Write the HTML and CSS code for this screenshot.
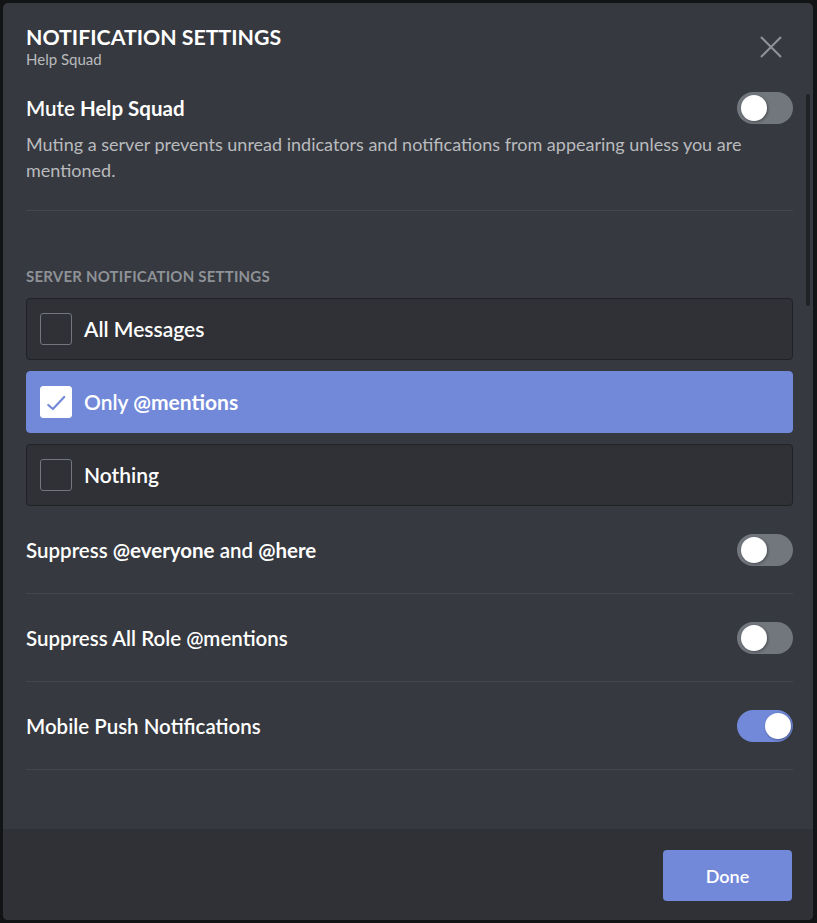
FILE: index.html
```html
<!DOCTYPE html>
<html>
<head>
<meta charset="utf-8">
<link rel="stylesheet" href="styles.css">
</head>
<body>
<div class="modal">
  <div class="header">
    <div class="title-block">
      <div class="title">Notification Settings</div>
      <div class="subtitle">Help Squad</div>
    </div>
    <button class="close" aria-label="Close">
      <svg width="24" height="24" viewBox="0 0 24 24"><path d="M2 2L22 22M22 2L2 22" stroke="#8e9297" stroke-width="2.2" fill="none"/></svg>
    </button>
  </div>
  <div class="scroller">
    <div class="scroll-thumb"></div>
    <div class="mute-row">
      <div class="mute-title">Mute <strong>Help Squad</strong></div>
      <div class="toggle off"><span class="knob"></span></div>
    </div>
    <div class="description">Muting a server prevents unread indicators and notifications from appearing unless you are mentioned.</div>
    <div class="divider"></div>
    <div class="section-label">Server Notification Settings</div>
    <div class="radio-group">
      <div class="radio">
        <span class="checkbox"></span>
        <span class="radio-label">All Messages</span>
      </div>
      <div class="radio selected">
        <span class="checkbox checked">
          <svg width="31" height="31" viewBox="0 0 31 31"><path d="M7.5 18L12.3 22.3L24 9.8" stroke="#7289da" stroke-width="2.2" fill="none" stroke-linecap="round" stroke-linejoin="round"/></svg>
        </span>
        <span class="radio-label">Only <strong>@mentions</strong></span>
      </div>
      <div class="radio">
        <span class="checkbox"></span>
        <span class="radio-label">Nothing</span>
      </div>
    </div>
    <div class="switch-row">
      <div class="switch-label">Suppress <strong>@everyone</strong> and <strong>@here</strong></div>
      <div class="toggle off"><span class="knob"></span></div>
    </div>
    <div class="switch-row">
      <div class="switch-label">Suppress All Role @mentions</div>
      <div class="toggle off"><span class="knob"></span></div>
    </div>
    <div class="switch-row">
      <div class="switch-label">Mobile Push Notifications</div>
      <div class="toggle on"><span class="knob"></span></div>
    </div>
  </div>
  <div class="footer">
    <button class="done">Done</button>
  </div>
</div>
</body>
</html>
```

FILE: styles.css
```css
* { box-sizing: border-box; }
html, body { margin: 0; padding: 0; }
body {
  background: #121315;
  padding: 3px 4px 3px 3px;
  font-family: Lato, "Noto Sans", sans-serif;
  color: #dcddde;
}
.modal {
  width: 810px;
  height: 917px;
  background: #36393f;
  border-radius: 5px;
  display: flex;
  flex-direction: column;
  overflow: hidden;
}
.header {
  display: flex;
  justify-content: space-between;
  align-items: flex-start;
  padding: 22px 20px 0 23px;
}
.title {
  font-size: 21.3px;
  line-height: 24px;
  font-weight: 700;
  text-transform: uppercase;
  color: #ffffff;
}
.subtitle {
  font-size: 15px;
  line-height: 18px;
  margin-top: 1px;
  color: #b9bbbe;
}
.close {
  background: none;
  border: 0;
  padding: 0;
  margin: 10px 10px 0 0;
  width: 24px;
  height: 24px;
  cursor: pointer;
}
.close svg { display: block; }
.scroller {
  position: relative;
  flex: 1;
  overflow: hidden;
  padding: 24px 20px 0 23px;
}
.scroll-thumb {
  position: absolute;
  right: 3px;
  top: 26px;
  width: 4px;
  height: 212px;
  border-radius: 2px;
  background: #202225;
}
.mute-row {
  display: flex;
  align-items: center;
  justify-content: space-between;
  height: 32px;
}
.mute-title {
  font-size: 20.5px;
  line-height: 24px;
  font-weight: 600;
  color: #ffffff;
}
.mute-title strong { font-weight: 700; }
.description {
  margin-top: 7px;
  font-size: 18px;
  line-height: 26px;
  color: #b9bbbe;
  padding-right: 30px;
}
.divider {
  height: 1px;
  background: #44474d;
  margin-top: 27px;
}
.section-label {
  margin-top: 56px;
  font-size: 15px;
  line-height: 18px;
  font-weight: 700;
  text-transform: uppercase;
  color: #8e9297;
  letter-spacing: 0.2px;
}
.radio-group {
  display: flex;
  flex-direction: column;
  gap: 11px;
  margin-top: 13px;
}
.radio {
  height: 62px;
  display: flex;
  align-items: center;
  gap: 12px;
  padding: 0 13px;
  background: #2f3136;
  border: 1px solid #202225;
  border-radius: 4px;
}
.radio.selected {
  background: #7289da;
  border-color: #7289da;
}
.checkbox {
  width: 32px;
  height: 32px;
  border: 1px solid #72767d;
  border-radius: 3px;
  flex: none;
}
.checkbox.checked {
  background: #ffffff;
  border-color: #ffffff;
  display: flex;
  align-items: center;
  justify-content: center;
}
.checkbox svg { display: block; }
.radio-label {
  font-size: 21px;
  line-height: 24px;
  font-weight: 600;
  color: #ffffff;
}
.radio-label strong { font-weight: 700; }
.switch-row {
  height: 88px;
  display: flex;
  align-items: center;
  justify-content: space-between;
  border-bottom: 1px solid #44474d;
}
.switch-label {
  font-size: 20.5px;
  line-height: 24px;
  font-weight: 600;
  color: #ffffff;
}
.switch-label strong { font-weight: 700; }
.toggle {
  width: 56px;
  height: 32px;
  border-radius: 16px;
  position: relative;
  flex: none;
  background: #72767d;
}
.toggle.on { background: #7289da; }
.knob {
  position: absolute;
  top: 3px;
  left: 4px;
  width: 26px;
  height: 26px;
  border-radius: 50%;
  background: #ffffff;
  box-shadow: 1px 1px 3px rgba(0,0,0,0.35);
}
.toggle.on .knob { left: auto; right: 2px; }
.footer {
  height: 91px;
  flex: none;
  background: #2f3136;
  display: flex;
  justify-content: flex-end;
  align-items: flex-start;
  padding: 21px 21px 0 0;
}
.done {
  width: 129px;
  height: 51px;
  border: 0;
  border-radius: 4px;
  background: #7289da;
  color: #ffffff;
  font-family: Lato, "Noto Sans", sans-serif;
  font-size: 18px;
  font-weight: 600;
  cursor: pointer;
}
```
